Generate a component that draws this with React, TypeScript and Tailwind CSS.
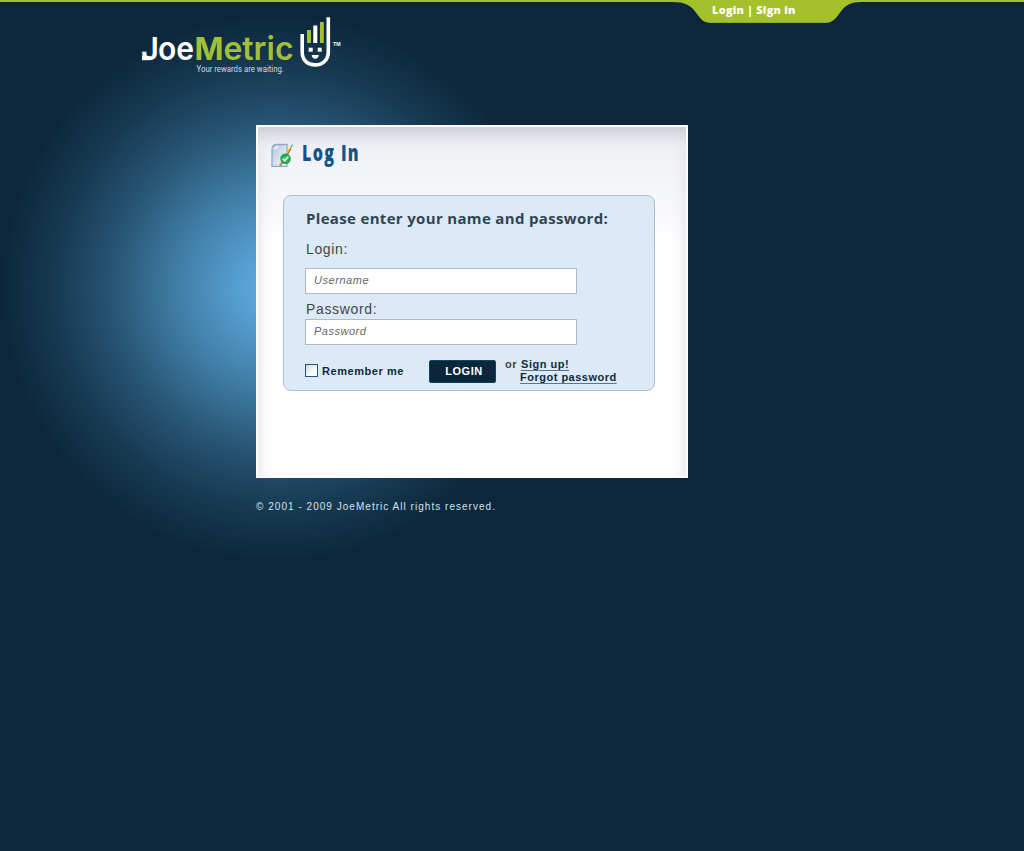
function Logo() {
  return (
    <svg width="204" height="62" viewBox="140 15 204 62" role="img" aria-label="JoeMetric">
      <g fontFamily="Inter, 'Liberation Sans', sans-serif" fontWeight="600">
        <rect x="142" y="56" width="8" height="4.200" fill="#fff" />
        <text x="141" y="60" fontSize="31" fill="#fff" textLength="18" lengthAdjust="spacingAndGlyphs">J</text>
        <text x="158" y="60" fontSize="32" fill="#fff" textLength="36" lengthAdjust="spacingAndGlyphs">oe</text>
        <text x="194.500" y="60" fontSize="31" fontWeight="700" fill="#a2c037" textLength="29" lengthAdjust="spacingAndGlyphs">M</text>
        <text x="223.500" y="60" fontSize="32" fill="#a2c037" textLength="70" lengthAdjust="spacingAndGlyphs">etric</text>
      </g>
      <text x="196.500" y="71.500" fontFamily="Roboto, sans-serif" fontSize="8.500" fill="#cfdbe3" textLength="87.500" lengthAdjust="spacingAndGlyphs">Your rewards are waiting.</text>
      <path d="M302.200 34V52C302.200 60.500 308 64.900 315.200 64.900S328.300 60 328.300 52V17.200" fill="none" stroke="#fff" strokeWidth="3.600" />
      <g>
        <rect x="307" y="30" width="4" height="13" fill="#a2c037" />
        <rect x="313.300" y="25.500" width="4" height="17.500" fill="#fff" />
        <rect x="320" y="22" width="3.800" height="21" fill="#a2c037" />
        <rect x="308.700" y="47.700" width="4" height="4" fill="#fff" />
        <rect x="317.700" y="47.700" width="4" height="4" fill="#fff" />
        <path d="M311.700 55H318.800C318.500 57.500 317.200 58.800 315.200 58.800S312 57.500 311.700 55Z" fill="#fff" />
      </g>
      <text x="333" y="45.500" fontFamily="'Liberation Sans', sans-serif" fontWeight="700" fontSize="5" fill="#fff" textLength="7.500" lengthAdjust="spacingAndGlyphs">TM</text>
    </svg>
  );
}

function DocumentIcon() {
  return (
    <svg width="23" height="24" viewBox="0 0 23 24" aria-hidden="true">
      <defs>
        <linearGradient id="paper" x1="0" y1="0" x2="1" y2="1">
          <stop offset="0" stopColor="#aec5de" />
          <stop offset="1" stopColor="#f8fbff" />
        </linearGradient>
        <radialGradient id="seal">
          <stop offset="0" stopColor="#38cf69" />
          <stop offset="1" stopColor="#149c42" />
        </radialGradient>
      </defs>
      <path d="M5 1.500H16V23.300H1V6Q1.500 2 5 1.500Z" fill="url(#paper)" stroke="#8fa9ca" strokeWidth="1.300" />
      <path d="M1.600 6.500Q3 2.500 7.500 2V4.500Q7 7 1.600 7Z" fill="#edf4fb" stroke="#9db3cf" strokeWidth=".5" />
      <path d="M9 22.500L19.500 5.500" stroke="#a9551b" strokeWidth="2.200" />
      <path d="M8.700 22L19.200 5" stroke="#ffc638" strokeWidth="1.200" />
      <path d="M19.500 5L21.800 1.500" stroke="#8ac4a8" strokeWidth="1.900" />
      <circle cx="14.500" cy="15.800" r="5.200" fill="url(#seal)" />
      <path d="M11.700 15.600L13.800 17.800L17.400 13.600" fill="none" stroke="#e8ffef" strokeWidth="1.600" />
    </svg>
  );
}

function TopBar() {
  return (
    <header className="h-[125px]">
      <div className="flex h-[2px] bg-[#a4c12b]">
        <nav className="relative ml-[668px] h-[23px] w-[194px] shrink-0 font-['Open_Sans',sans-serif] text-[11px] font-extrabold leading-[20px] text-white">
          <svg className="absolute inset-0" width="194" height="23" viewBox="0 0 194 23" aria-hidden="true">
            <path d="M0 0H194V2C182 2 177 5 171 14C167 20 163 23 157 23H44C35 23 33 19 29 14C23 5 17 2 4 2H0Z" fill="#a4c12b" />
            <path d="M45 22.500H157" stroke="#8cae27" />
          </svg>
          <div className="relative flex whitespace-pre pl-[44px] tracking-[0.240px]">
            <a href="#login">Login</a><span> | </span><a href="#signin">Sign in</a>
          </div>
        </nav>
      </div>
      <div className="pl-[140px] pt-[13px]"><Logo /></div>
    </header>
  );
}

function LoginForm() {
  return (
    <form className="ml-[25px] h-[196px] w-[372px] rounded-[8px] border border-[#adbfce] bg-[#dceaf7] pl-[21px] pt-[12px]">
      <h2 className="h-5 whitespace-nowrap pl-px font-['Open_Sans',sans-serif] text-[15px] font-bold leading-5 tracking-[0.330px] text-[#304553]">Please enter your name and password:</h2>
      <label htmlFor="user" className="mt-[11px] block h-5 pl-px text-[14px] leading-5 tracking-[0.650px] text-[#444]">Login:</label>
      <input id="user" placeholder="Username" className="mt-[9px] block h-[26px] w-[272px] border border-[#afbac6] bg-white px-2 pb-[2px] text-[11px] italic tracking-[0.550px] placeholder:text-[#666]" />
      <label htmlFor="pass" className="mt-[5px] block h-5 pl-px text-[14px] leading-5 tracking-[0.650px] text-[#444]">Password:</label>
      <input id="pass" type="password" placeholder="Password" className="block h-[26px] w-[272px] border border-[#afbac6] bg-white px-2 pb-[2px] text-[11px] italic tracking-[0.500px] placeholder:text-[#666]" />
      <div className="flex items-start text-[11px] font-bold leading-[13px] tracking-[0.500px] text-[#0d2a40]">
        <label className="mt-[19px] flex w-[124px] gap-[4px] whitespace-nowrap">
          <input type="checkbox" className="size-[13px] shrink-0 appearance-none border border-[#1d568a] bg-linear-to-br from-[#d6d6d6] to-white to-70%" />
          <span className="pt-px tracking-[0.560px]">Remember me</span>
        </label>
        <button type="button" className="mt-[15px] h-[23px] w-[67px] rounded-[2px] border border-[#0a4761] bg-[#0b263b] pl-[3px] text-[11px] tracking-[0.500px] text-white">LOGIN</button>
        <div className="ml-[9px] mt-[13px] whitespace-nowrap">
          <div className="text-[#444]">or <a href="#signup" className="ml-[0.500px] text-[#0d2a40] underline decoration-[#5b7488] decoration-1 underline-offset-2">Sign up!</a></div>
          <a href="#forgot" className="ml-[15px] block underline decoration-[#5b7488] decoration-1 underline-offset-2">Forgot password</a>
        </div>
      </div>
    </form>
  );
}

export default function App() {
  return (
    <div className="h-[851px] overflow-hidden bg-[#0c273b] bg-[radial-gradient(circle_275px_at_276px_288px,#60aee2_0%,#559fd0_14%,#427fa8_35%,#285675_59%,#173a52_80%,#0c273b_100%)] font-['Liberation_Sans',Arial,sans-serif]">
      <TopBar />
      <main className="ml-[256px] h-[353px] w-[432px] border-2 border-white bg-linear-to-b from-[#eeeff4] via-[#f6f7fb] via-20% to-white to-35% shadow-[inset_0_20px_16px_-12px_#c9ced4,inset_12px_0_14px_-10px_#e3e6e9,inset_-12px_0_14px_-10px_#e3e6e9]">
        <div className="flex h-[68px] pl-[13px] pt-[16px]">
          <DocumentIcon />
          <h1 className="ml-[8px] mt-[-3px] h-6 origin-left scale-x-[0.700] whitespace-nowrap font-['Open_Sans',sans-serif] text-[23px] font-extrabold leading-6 tracking-[1.900px] text-[#10548d]">Log In</h1>
        </div>
        <LoginForm />
      </main>
      <footer className="ml-[256px] mt-[22px] text-[10px] leading-[14px] tracking-[1.030px] text-[#d3e1eb]">© 2001 - 2009 JoeMetric All rights reserved.</footer>
    </div>
  );
}
